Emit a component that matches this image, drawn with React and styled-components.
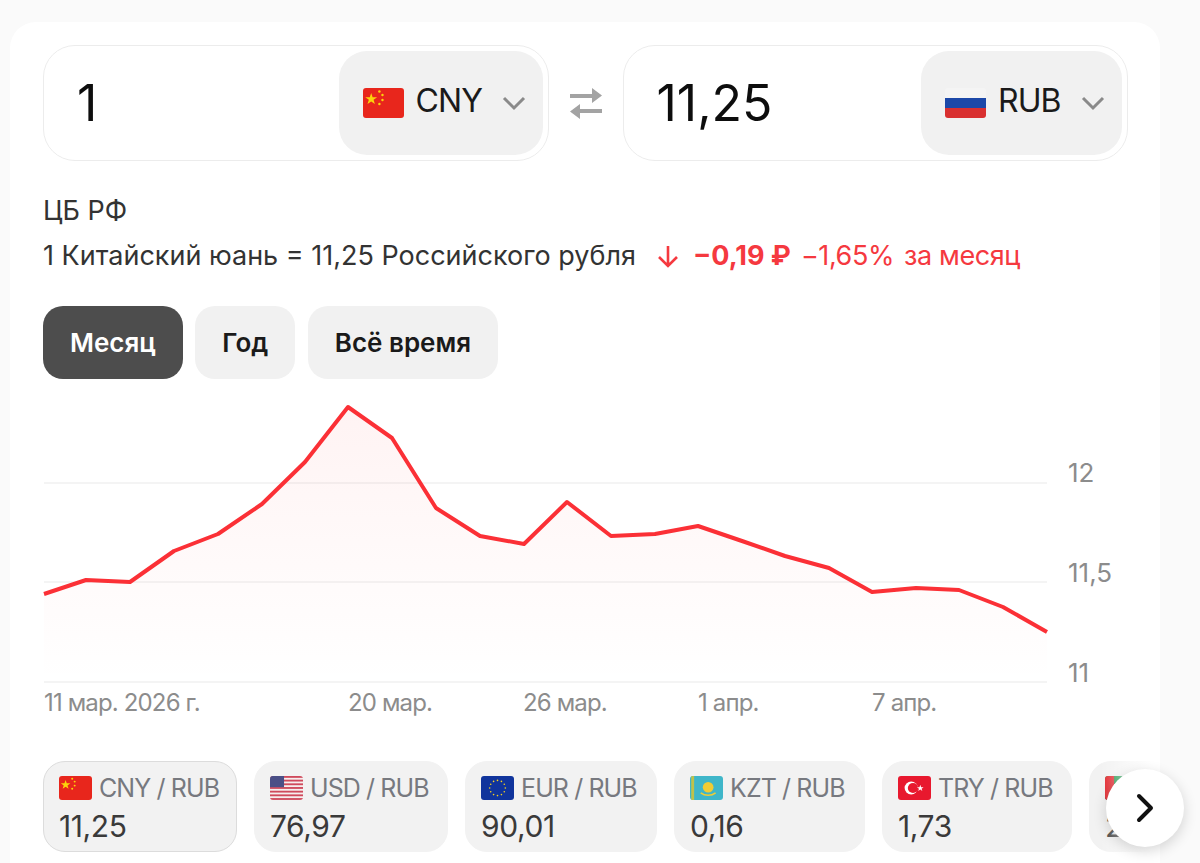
import styled, { createGlobalStyle } from "styled-components"

const GlobalStyle = createGlobalStyle`
  html, body { margin: 0; height: 100%; background: #fafafa; overflow: hidden; }
  body { font-family: "Inter", "Noto Sans", sans-serif; color: #111; }
`

const points = [
  [44, 594], [86, 580], [130, 582], [174, 551], [218, 534], [262, 504], [305, 462], [348, 407],
  [392, 438], [436, 508], [480, 536], [524, 544], [567, 502], [611, 536], [655, 534], [698, 526],
  [742, 541], [785, 556], [829, 568], [872, 592], [916, 588], [959, 590], [1003, 607], [1047, 632],
]
const CHART_TOP = 391
const shifted = points.map(([x, y]) => [x - 43, y - CHART_TOP])
const linePath = shifted.map(p => p.join(",")).join(" ")
const areaPath = `1,291 ${linePath} 1004,291`

const tiles = [
  { code: "cny", pair: "CNY / RUB", value: "11,25", width: 194, active: true },
  { code: "usd", pair: "USD / RUB", value: "76,97", width: 194 },
  { code: "eur", pair: "EUR / RUB", value: "90,01", width: 192 },
  { code: "kzt", pair: "KZT / RUB", value: "0,16", width: 191 },
  { code: "try", pair: "TRY / RUB", value: "1,73", width: 190 },
  { code: "aed", pair: "AED / RUB", value: "20,96", width: 192 },
]

function FlagArt({ code }) {
  if (code === "cny") return (
    <>
      <rect width="40" height="30" fill="#e8261c" />
      <polygon points="8,5 9.4,9.2 13.8,9.2 10.3,11.8 11.6,16 8,13.4 4.4,16 5.7,11.8 2.2,9.2 6.6,9.2" fill="#fbd40b" />
      <circle cx="16" cy="3.5" r="1.2" fill="#fbd40b" />
      <circle cx="19" cy="7" r="1.2" fill="#fbd40b" />
      <circle cx="19" cy="12" r="1.2" fill="#fbd40b" />
      <circle cx="16" cy="16" r="1.2" fill="#fbd40b" />
    </>
  )
  if (code === "rub") return (
    <>
      <rect width="40" height="10" fill="#f4f4f4" />
      <rect y="10" width="40" height="10" fill="#1c48a8" />
      <rect y="20" width="40" height="10" fill="#d93030" />
    </>
  )
  if (code === "usd") return (
    <>
      <rect width="40" height="30" fill="#f6eeee" />
      {[0, 1, 2, 3, 4, 5, 6].map(i => <rect key={i} y={i * 4.6} width="40" height="2.3" fill="#cf4a5c" />)}
      <rect width="17" height="14" fill="#4a4f86" />
    </>
  )
  if (code === "eur") return (
    <>
      <rect width="40" height="30" fill="#10349c" />
      {Array.from({ length: 12 }, (_, i) => (
        <circle
          key={i}
          cx={20 + 9.5 * Math.cos((i * Math.PI) / 6)}
          cy={15 + 9.5 * Math.sin((i * Math.PI) / 6)}
          r="1"
          fill="#f5d020"
        />
      ))}
    </>
  )
  if (code === "kzt") return (
    <>
      <rect width="40" height="30" fill="#3fb6c9" />
      <rect x="1.5" width="3.5" height="30" fill="#bfc24a" />
      <circle cx="22" cy="14" r="6.5" fill="#f0cc35" />
      <path d="M13 21c5 4 13 4 18 0" fill="none" stroke="#f0cc35" strokeWidth="2" />
    </>
  )
  if (code === "try") return (
    <>
      <rect width="40" height="30" fill="#e8182e" />
      <circle cx="16" cy="15" r="8" fill="#fff" />
      <circle cx="18.2" cy="15" r="6.3" fill="#e8182e" />
      <polygon points="27,11 28,14 31,14 28.6,15.8 29.5,18.8 27,17 24.5,18.8 25.4,15.8 23,14 26,14" fill="#fff" />
    </>
  )
  return (
    <>
      <rect width="40" height="10" fill="#1f9a4d" />
      <rect y="10" width="40" height="10" fill="#fff" />
      <rect y="20" width="40" height="10" fill="#111" />
      <rect width="11" height="30" fill="#e3242b" />
    </>
  )
}

function Flag({ code, small }) {
  return (
    <FlagBox $small={small} viewBox="0 0 40 30" preserveAspectRatio="none">
      <FlagArt code={code} />
    </FlagBox>
  )
}

function Converter({ value, code, label, wide }) {
  return (
    <Field>
      <Amount>{value}</Amount>
      <Select $wide={wide}>
        <Flag code={code} />
        <SelectLabel>{label}</SelectLabel>
        <svg width="24" height="24" viewBox="0 0 24 24" fill="none" stroke="#8a8a8a" strokeWidth="3">
          <path d="M2 7l10 10 10-10" />
        </svg>
      </Select>
    </Field>
  )
}

function App() {
  return (
    <>
      <GlobalStyle />
      <Card>
        <ConverterRow>
          <Converter value="1" code="cny" label="CNY" wide />
          <SwapIcon width="36" height="32" viewBox="0 0 36 32" fill="#a3a3a3">
            <path d="M2 7h22V1l10 7.5L24 16v-5H2z" />
            <path d="M34 22H12v-5L2 24.5 12 32v-6h22z" />
          </SwapIcon>
          <Converter value="11,25" code="rub" label="RUB" />
        </ConverterRow>

        <Source>ЦБ РФ</Source>
        <RateLine>
          <span>1 Китайский юань = 11,25 Российского рубля</span>
          <Delta>
            <DownArrow width="24" height="26" viewBox="0 0 24 26" fill="none" stroke="#f5393f" strokeWidth="2.6">
              <path d="M12 3v20M3 14l9 9 9-9" />
            </DownArrow>
            <b>−0,19 ₽</b>
            <DeltaText>−1,65%</DeltaText>
            <DeltaText>за месяц</DeltaText>
          </Delta>
        </RateLine>

        <Periods>
          <Period $active>Месяц</Period>
          <Period>Год</Period>
          <Period>Всё время</Period>
        </Periods>

        <Chart width="1116" height="338" viewBox="0 0 1116 338">
          <defs>
            <linearGradient id="area" x1="0" y1="0" x2="0" y2="1">
              <stop offset="0" stopColor="#ff3b3b" stopOpacity="0.06" />
              <stop offset="1" stopColor="#ff3b3b" stopOpacity="0" />
            </linearGradient>
          </defs>
          {[92, 191, 291].map(y => <line key={y} x1="1" x2="1004" y1={y} y2={y} stroke="#f1f1f1" strokeWidth="1.5" />)}
          <polygon points={areaPath} fill="url(#area)" />
          <polyline points={linePath} fill="none" stroke="#fb3036" strokeWidth="4" strokeLinejoin="round" />
          <AxisText x="1025" y="91">12</AxisText>
          <AxisText x="1025" y="191">11,5</AxisText>
          <AxisText x="1025" y="291">11</AxisText>
          <DateText x="1" y="320">11 мар. 2026 г.</DateText>
          <DateText x="305" y="320">20 мар.</DateText>
          <DateText x="480" y="320">26 мар.</DateText>
          <DateText x="655" y="320">1 апр.</DateText>
          <DateText x="829" y="320">7 апр.</DateText>
        </Chart>

        <TileStrip>
          {tiles.map(t => (
            <Tile key={t.code} $active={t.active} $width={t.width}>
              <TileHead>
                <Flag code={t.code} small />
                <span>{t.pair}</span>
              </TileHead>
              <TileValue>{t.value}</TileValue>
            </Tile>
          ))}
        </TileStrip>
        <Fade />
      </Card>
      <NextButton>
        <svg width="24" height="30" viewBox="0 0 24 30" fill="none" stroke="#111" strokeWidth="4" strokeLinecap="round" strokeLinejoin="round">
          <path d="M6 3l12 12L6 27" />
        </svg>
      </NextButton>
    </>
  )
}

export default App

const Card = styled.div`
  position: relative;
  box-sizing: border-box;
  width: 1150px;
  height: 900px;
  margin: 22px 0 0 10px;
  padding: 23px 32px 0 33px;
  background: #fff;
  border-radius: 26px;
  overflow: hidden;
`

const ConverterRow = styled.div`
  display: flex;
  align-items: center;
  gap: 19px;
  width: 1085px;
`

const Field = styled.div`
  flex: 1;
  box-sizing: border-box;
  height: 116px;
  display: flex;
  align-items: center;
  justify-content: space-between;
  padding: 0 5px 0 33px;
  border: 1.5px solid #ececec;
  border-radius: 32px;
`

const Amount = styled.div`
  font-size: 50px;
  line-height: 60px;
  margin-top: -1px;
  color: #0d0d0d;
`

const Select = styled.div`
  width: ${p => (p.$wide ? "204px" : "201px")};
  height: 104px;
  box-sizing: border-box;
  display: flex;
  align-items: center;
  gap: 12px;
  padding-left: 24px;
  background: #f1f1f1;
  border-radius: 28px;
`

const SelectLabel = styled.span`
  font-size: 32px;
  letter-spacing: -0.9px;
  line-height: 38px;
  margin: -4px 8px 0 0;
  color: #1a1a1a;
`

const SwapIcon = styled.svg`
  flex: none;
`

const FlagBox = styled.svg`
  flex: none;
  width: ${p => (p.$small ? "33px" : "41px")};
  height: ${p => (p.$small ? "24px" : "30px")};
  border-radius: 3px;
`

const Source = styled.div`
  margin-top: 34px;
  font-size: 27px;
  line-height: 32px;
  color: #333;
`

const RateLine = styled.div`
  display: flex;
  align-items: center;
  margin-top: 13px;
  font-size: 27px;
  line-height: 32px;
  color: #333;
`

const Delta = styled.div`
  display: flex;
  align-items: center;
  gap: 10px;
  margin-left: 20px;
  color: #f5393f;
`

const DownArrow = styled.svg`
  margin-right: 3px;
`

const DeltaText = styled.span`
  letter-spacing: -0.4px;
`

const Periods = styled.div`
  display: flex;
  gap: 12.5px;
  margin-top: 34px;
`

const Period = styled.div`
  height: 73px;
  display: flex;
  align-items: center;
  padding: 0 27px;
  border-radius: 20px;
  font-size: 26px;
  font-weight: 600;
  background: ${p => (p.$active ? "#4d4d4d" : "#f1f1f1")};
  color: ${p => (p.$active ? "#fff" : "#1a1a1a")};
`

const Chart = styled.svg`
  display: block;
  margin-top: 12px;
`

const AxisText = styled.text`
  font-size: 26px;
  fill: #8c8c8c;
`

const DateText = styled.text`
  font-size: 24px;
  letter-spacing: -0.85px;
  fill: #8c8c8c;
`

const TileStrip = styled.div`
  display: flex;
  gap: 17px;
  margin-top: 32px;
  width: 1200px;
`

const Tile = styled.div`
  flex: none;
  width: ${p => p.$width}px;
  height: 91px;
  box-sizing: border-box;
  padding: 11px 15px;
  background: #f2f2f2;
  border: 1px solid ${p => (p.$active ? "#dcdcdc" : "#f2f2f2")};
  border-radius: 22px;
`

const TileHead = styled.div`
  display: flex;
  align-items: center;
  gap: 7px;
  font-size: 25px;
  letter-spacing: -0.9px;
  line-height: 30px;
  white-space: nowrap;
  color: #77797f;
`

const TileValue = styled.div`
  margin-top: 7px;
  font-size: 30px;
  letter-spacing: -0.4px;
  line-height: 32px;
  color: #3a3a3a;
`

const Fade = styled.div`
  position: absolute;
  top: 735px;
  right: 0;
  width: 60px;
  height: 130px;
  background: linear-gradient(to right, rgba(255, 255, 255, 0), #fff 85%);
`

const NextButton = styled.div`
  position: absolute;
  left: 1106px;
  top: 769px;
  width: 78px;
  height: 78px;
  display: flex;
  align-items: center;
  justify-content: center;
  background: #fff;
  border-radius: 50%;
  box-shadow: 0 4px 14px rgba(0, 0, 0, 0.16);
`
